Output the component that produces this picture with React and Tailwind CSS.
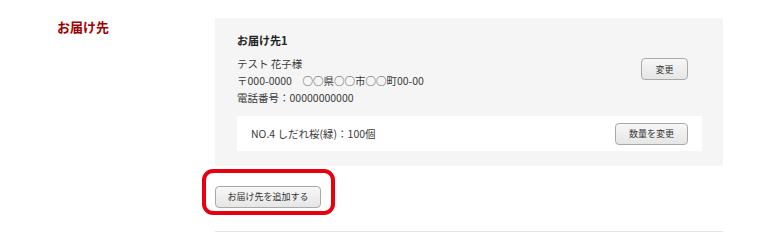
import React from "react";

const font = { fontFamily: '"Noto Sans CJK JP", "Noto Sans", sans-serif' };

function Btn({ children, className = "" }) {
  return (
    <button
      className={`h-[22px] rounded-[4px] border border-[#a9a9a9] bg-gradient-to-b from-[#f7f7f7] to-[#e6e6e6] text-[9px] text-[#333] leading-none ${className}`}
    >
      {children}
    </button>
  );
}

export default function App() {
  return (
    <div className="w-[780px] h-[232px] bg-white flex text-[#3a3a3a]" style={font}>
      {/* Left label */}
      <div className="w-[215px] shrink-0 pl-[57px] pt-[17px]">
        <h2 className="text-[13px] font-bold text-[#a30000] leading-[20px]">お届け先</h2>
      </div>

      {/* Right column */}
      <div className="w-[508px] pt-[18px]">
        <div className="bg-[#f5f5f5] pl-[22px] pr-[21px] pt-[14px] pb-[15px]">
          <div className="text-[11px] font-bold leading-[17px] text-[#222]">お届け先1</div>
          <div className="flex items-start justify-between mt-[6px] pr-[14px]">
            <div className="text-[10.5px] leading-[17px]">
              <div>テスト 花子様</div>
              <div>〒000-0000　○○県○○市○○町00-00</div>
              <div>電話番号：00000000000</div>
            </div>
            <Btn className="w-[47px] mt-[3px]">変更</Btn>
          </div>
          <div className="mt-[10px] bg-white h-[35px] flex items-center justify-between pl-[14px] pr-[14px]">
            <span className="text-[10.5px]">NO.4 しだれ桜(緑)：100個</span>
            <Btn className="w-[73px]">数量を変更</Btn>
          </div>
        </div>

        <div className="relative mt-[15px] h-[22px]">
          <div className="absolute left-[-13px] top-[-12px] w-[133px] h-[46px] rounded-[11px] border-[4px] border-[#e60012]" />
          <Btn className="relative w-[106px]">お届け先を追加する</Btn>
        </div>

        <div className="mt-[28px] border-t border-[#e5e5e5]" />
      </div>
    </div>
  );
}
